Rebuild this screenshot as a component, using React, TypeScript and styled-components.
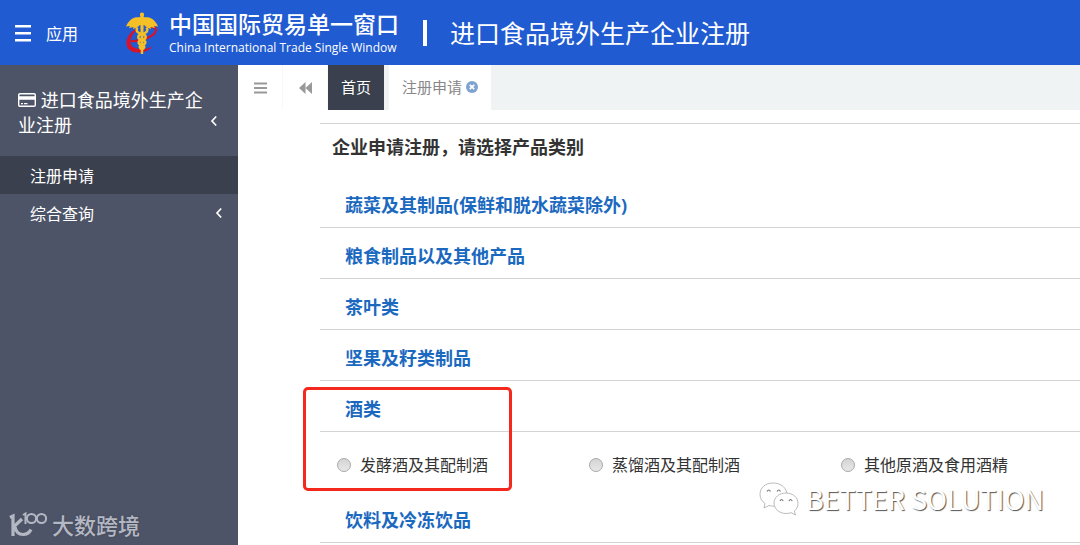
import React from "react";
import styled, { createGlobalStyle } from "styled-components";

const GlobalStyle = createGlobalStyle`
  *, *::before, *::after { box-sizing: border-box; }
  html, body, #root { height: 100%; }
  body {
    margin: 0;
    background: #fff;
    color: #333;
    font-family: "Open Sans", "Noto Sans CJK SC", sans-serif;
    font-size: 16px;
    overflow: hidden;
  }
  button { border: 0; padding: 0; background: none; font: inherit; color: inherit; cursor: pointer; }
  a { color: inherit; text-decoration: none; }
  h1, h2, h3, p, ul { margin: 0; padding: 0; font-weight: inherit; }
  ul { list-style: none; }
  svg { display: block; flex: none; }
`;

const Page = styled.div`
  position: relative;
  display: flex;
  flex-direction: column;
  min-height: 100vh;
  overflow: hidden;
`;

const Header = styled.header`
  display: flex;
  align-items: center;
  height: 65px;
  padding-left: 15px;
  background: #205bd1;
  color: #fff;
  white-space: nowrap;
`;

const AppsButton = styled.button`
  display: flex;
  align-items: center;
  gap: 14px;
  width: 110px;
  padding-top: 2px;
  line-height: 24px;
`;

const Brand = styled.a`
  display: flex;
  align-items: center;
  gap: 10px;
  width: 298px;
`;

const BrandText = styled.span`
  display: flex;
  flex-direction: column;
  gap: 2px;
`;

const BrandName = styled.span`
  font-size: 23px;
  font-weight: 500;
  line-height: 28px;
`;

const BrandSub = styled.span`
  font-size: 12px;
  line-height: 16px;
`;

const Title = styled.h1`
  display: flex;
  align-items: center;
  gap: 23px;
  font-size: 25px;
  line-height: 32px;

  &::before {
    content: "";
    width: 4px;
    height: 26px;
    background: #fff;
  }
`;

const Body = styled.div`
  display: flex;
  flex: 1;
`;

const Sidebar = styled.nav`
  flex: 0 0 238px;
  background: #4e5467;
  color: #fff;
`;

const MenuGroup = styled.button`
  display: flex;
  align-items: flex-end;
  justify-content: space-between;
  width: 100%;
  padding: 23px 20px 18px 18px;
  font-size: 18px;
  line-height: 25px;
  text-align: left;

  span svg { display: inline-block; }
`;

const GroupLabel = styled.span`
  width: 190px;
`;

const GroupArrow = styled.span`
  padding-bottom: 5px;
`;

const MenuItem = styled.a<{ $active?: boolean }>`
  display: flex;
  align-items: center;
  justify-content: space-between;
  height: 38px;
  padding: 0 15px 0 30px;
  background: ${(p) => (p.$active ? "#3a404d" : "transparent")};
`;

const Main = styled.main`
  flex: 1;
  min-width: 0;
`;

const TabBar = styled.div`
  display: flex;
  height: 45px;
  background: #eff3f4;
  color: #888;
  font-size: 15px;
`;

const TabTool = styled.button`
  display: flex;
  align-items: center;
  justify-content: center;
  width: 45px;
  background: #fff;
  border-right: 1px solid #f8f8f8;
`;

const Tab = styled.button<{ $home?: boolean }>`
  display: flex;
  align-items: center;
  gap: 4px;
  padding: 0 13px 2px;
  background: ${(p) => (p.$home ? "#3a404d" : "#fff")};
  color: ${(p) => (p.$home ? "#fff" : "#888")};
  margin-right: 5px;
`;

const Content = styled.section`
  padding: 13px 0 0 82px;
`;

const Heading = styled.h2`
  height: 54px;
  padding: 9px 12px;
  border-top: 1px solid #d4d4d4;
  font-size: 18px;
  font-weight: 700;
  line-height: 28px;
`;

const Category = styled.li`
  position: relative;
`;

const CategoryName = styled.h3`
  padding: 14px 25px 8px;
  border-bottom: 1px solid #d4d4d4;
  color: #1b69bf;
  font-size: 18px;
  font-weight: 700;
  line-height: 28px;
`;

const Options = styled.div`
  display: flex;
  padding: 21px 17px 15px;
`;

const Option = styled.label`
  display: flex;
  align-items: center;
  gap: 9px;
  flex: 0 0 252px;
  line-height: 24px;
  white-space: nowrap;
`;

const Radio = styled.input`
  appearance: none;
  width: 14px;
  height: 14px;
  margin: 0;
  border: 1px solid #a9a9a9;
  border-radius: 50%;
  background: linear-gradient(#d4d4d4, #e8e8e8);

  &:checked { background: radial-gradient(#444 35%, #e0e0e0 40%); }
`;

const Highlight = styled.div`
  position: absolute;
  top: 6px;
  left: -17px;
  width: 209px;
  height: 104px;
  border: 3px solid #f5281e;
  border-radius: 5px;
  pointer-events: none;
`;

const SiteMark = styled.div`
  position: absolute;
  left: 9px;
  bottom: 5px;
  display: flex;
  align-items: center;
  gap: 4px;
  color: #b4b8c3;
  font-size: 22px;
  font-weight: 500;
  line-height: 30px;
  text-shadow: 0 0 2px #3a3f4e;
`;

const AuthorMark = styled.div`
  position: absolute;
  right: 36px;
  bottom: 29px;
  display: flex;
  align-items: center;
  gap: 7px;
  color: #fff;
  font-family: "Noto Sans CJK SC", sans-serif;
  font-size: 27px;
  line-height: 34px;
  text-shadow: 1px 1px 1px #555;
`;

const Chevron = () => (
  <svg width="8" height="12" viewBox="0 0 8 12" fill="none" stroke="#fff" strokeWidth="1.7" aria-hidden="true">
    <path d="M6.2 1.5 2 6l4.2 4.5" />
  </svg>
);

const CardIcon = () => (
  <svg width="18" height="14" viewBox="0 0 18 14" aria-hidden="true">
    <rect x="0.7" y="0.7" width="16.6" height="12.6" rx="1.3" fill="none" stroke="#fff" strokeWidth="1.4" />
    <path fill="#fff" d="M1 3.2h16v3.6H1zM3 10h2v1.3H3zM6 10h3.5v1.3H6z" />
  </svg>
);

const Emblem = () => (
  <svg width="34" height="44" viewBox="0 0 34 44" fill="none" aria-hidden="true">
    <path
      d="M11 18C5 21 1 27 1.500 33c.5 6 6 9 13 8.500 6-.5 11-3 13-6-5 2.500-9 3-13 2.500-6-.5-9-3-9-7.500 0-4 2-8 6-11z"
      fill="#d9122b"
    />
    <path
      d="M6 30c9 1 25-5 25-11 0-3.500-5-4-10-2.500"
      stroke="#d9122b"
      strokeWidth="2.200"
    />
    <path
      d="M17 1.500c-1.600 0-2.300 1-2 2.500l.4 2C14 6.500 12 6 10 6.500 6 7.500 3 11 1 15.500l4-.5-1 2 4.500-1L8 18l4-1.500 3-2.500h4l3 2.500 4 1.500-.5-2 4.500 1-1-2 4 .5C31 11 28 7.500 24 6.500c-2-.5-4 0-5.400-.5l.4-2c.3-1.500-.4-2.500-2-2.500z"
      fill="#f5c026"
    />
    <path d="M15.400 13h3.200l-.4 30h-2.400z" fill="#f5c026" />
    <path
      d="M12.500 16.500c-2 3-.5 5.500 4.500 6.500s5 5 0 6-4 4 0 5 2 3.500 0 4.500M21.500 16.500c2 3 .5 5.500-4.500 6.500s-5 5 0 6 4 4 0 5-2 3.500 0 4.500"
      stroke="#f5c026"
      strokeWidth="2.400"
    />
  </svg>
);

const categories: { name: string; options?: string[]; marked?: boolean }[] = [
  { name: "蔬菜及其制品(保鲜和脱水蔬菜除外)" },
  { name: "粮食制品以及其他产品" },
  { name: "茶叶类" },
  { name: "坚果及籽类制品" },
  { name: "酒类", options: ["发酵酒及其配制酒", "蒸馏酒及其配制酒", "其他原酒及食用酒精"], marked: true },
  { name: "饮料及冷冻饮品" },
];

export default function App() {
  return (
    <Page>
      <GlobalStyle />
      <Header>
        <AppsButton type="button">
          <svg width="17" height="18" viewBox="0 0 17 18" fill="#fff" aria-hidden="true">
            <path d="M0 0h16v2.500H0zM0 7h16v2.500H0zM0 14h16v2.500H0z" />
          </svg>
          应用
        </AppsButton>
        <Brand href="#">
          <Emblem />
          <BrandText>
            <BrandName>中国国际贸易单一窗口</BrandName>
            <BrandSub>China International Trade Single Window</BrandSub>
          </BrandText>
        </Brand>
        <Title>进口食品境外生产企业注册</Title>
      </Header>
      <Body>
        <Sidebar>
          <MenuGroup type="button">
            <GroupLabel>
              <CardIcon /> 进口食品境外生产企业注册
            </GroupLabel>
            <GroupArrow>
              <Chevron />
            </GroupArrow>
          </MenuGroup>
          <MenuItem href="#" $active>
            注册申请
          </MenuItem>
          <MenuItem href="#">
            综合查询
            <Chevron />
          </MenuItem>
        </Sidebar>
        <Main>
          <TabBar>
            <TabTool type="button" aria-label="菜单">
              <svg width="13" height="12" viewBox="0 0 13 12" fill="#999" aria-hidden="true">
                <path d="M0 .5h13v2H0zM0 5h13v2H0zM0 9.500h13v2H0z" />
              </svg>
            </TabTool>
            <TabTool type="button" aria-label="后退">
              <svg width="13" height="12" viewBox="0 0 13 12" fill="#999" aria-hidden="true">
                <path d="M6.500 0v12L0 6zM13 0v12L6.500 6z" />
              </svg>
            </TabTool>
            <Tab type="button" $home>
              首页
            </Tab>
            <Tab type="button">
              注册申请
              <svg width="12" height="12" viewBox="0 0 12 12" aria-hidden="true">
                <circle cx="6" cy="6" r="6" fill="#7fa3cf" />
                <path d="M3.800 3.800l4.400 4.400M8.200 3.800L3.800 8.200" stroke="#fff" strokeWidth="1.800" />
              </svg>
            </Tab>
          </TabBar>
          <Content>
            <Heading>企业申请注册，请选择产品类别</Heading>
            <ul>
              {categories.map((c) => (
                <Category key={c.name}>
                  <CategoryName>{c.name}</CategoryName>
                  {c.options && (
                    <Options>
                      {c.options.map((o) => (
                        <Option key={o}>
                          <Radio type="radio" name="product" />
                          {o}
                        </Option>
                      ))}
                    </Options>
                  )}
                  {c.marked && <Highlight />}
                </Category>
              ))}
            </ul>
          </Content>
        </Main>
      </Body>
      <SiteMark>
        <svg width="39" height="26" viewBox="0 0 39 26" fill="none" stroke="#b4b8c3" aria-hidden="true">
          <path d="M1 5.500l3-1.500V24M13 7L5 14.500M6 15c1 5 4 7.500 8 7.500s6.500-2 8-5" strokeWidth="3.200" />
          <path d="M14 3l2.500-1.500V12" strokeWidth="2" />
          <circle cx="22.500" cy="6.500" r="4.600" strokeWidth="2" />
          <circle cx="32.500" cy="6.500" r="4.600" strokeWidth="2" />
        </svg>
        大数跨境
      </SiteMark>
      <AuthorMark>
        <svg width="40" height="34" viewBox="0 0 40 34" fill="#fff" stroke="#aaa" strokeWidth="0.800" aria-hidden="true">
          <path d="M14 1C6 1 1 6 1 12.500c0 4 2 7 5 9L5 26l5-2.500c2 .5 5 1 8 .5 8-1 10-6 10-11C28 6 22 1 14 1z" />
          <path d="M27 11c-7 0-12 4.500-12 10s5 10.500 12 10.500c2 0 3.500-.3 5-.8l4.500 2.300-1.200-4C38 27 39 24.500 39 21.500 39 15.500 34 11 27 11z" />
          <path d="M8 9.500q1.800-3 3.500 0M18 9.500q1.800-3 3.500 0M21 19q1.500-3 3.200 0M30 19q1.500-3 3.200 0" fill="none" stroke="#777" strokeWidth="1.200" />
        </svg>
        BETTER SOLUTION
      </AuthorMark>
    </Page>
  );
}
